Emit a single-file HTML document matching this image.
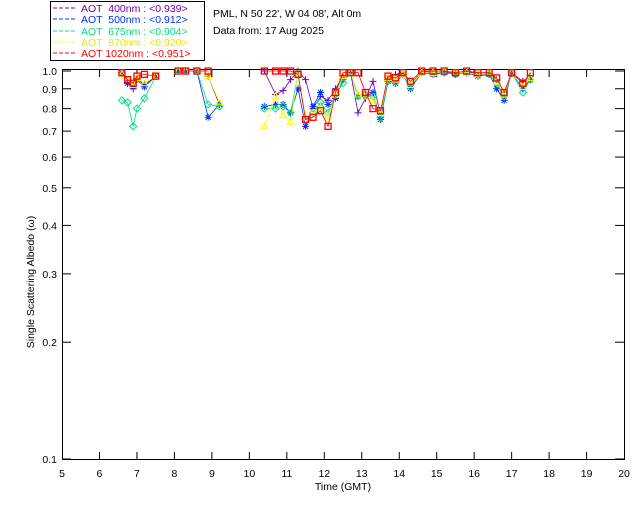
<!DOCTYPE html>
<html><head><meta charset="utf-8"><style>
body{margin:0;background:#fff;width:640px;height:512px;overflow:hidden}
svg text{font-family:"Liberation Sans",sans-serif;font-size:10.5px}
</style></head><body>
<svg id="s" width="640" height="512" xmlns="http://www.w3.org/2000/svg">
<rect x="50.5" y="1.5" width="154" height="59" fill="#fff" stroke="#000"/>
<g>
<line x1="53" y1="8" x2="76" y2="8" stroke="#7000b0" stroke-dasharray="4,2"/><text x="81" y="12" fill="#7000b0" xml:space="preserve">AOT  400nm : &lt;0.939&gt;</text>
<line x1="53" y1="19" x2="76" y2="19" stroke="#0030ff" stroke-dasharray="4,2"/><text x="81" y="23" fill="#0030ff" xml:space="preserve">AOT  500nm : &lt;0.912&gt;</text>
<line x1="53" y1="31" x2="76" y2="31" stroke="#00e080" stroke-dasharray="4,2"/><text x="81" y="35" fill="#00e080" xml:space="preserve">AOT  675nm : &lt;0.904&gt;</text>
<line x1="53" y1="42" x2="76" y2="42" stroke="#ffff00" stroke-dasharray="4,2"/><text x="81" y="46" fill="#e8e800" xml:space="preserve">AOT  870nm : &lt;0.920&gt;</text>
<line x1="53" y1="53" x2="76" y2="53" stroke="#ff0000" stroke-dasharray="4,2"/><text x="81" y="57" fill="#ff0000" xml:space="preserve">AOT 1020nm : &lt;0.951&gt;</text>
</g>
<text x="213" y="17">PML, N 50 22', W 04 08', Alt 0m</text>
<text x="213" y="34">Data from: 17 Aug 2025</text>
<rect x="62.5" y="69.5" width="562" height="390" fill="none" stroke="#000"/>
<g id="ax"></g>
<g id="data"></g>
<text x="343" y="490" text-anchor="middle">Time (GMT)</text>
<text transform="translate(34,282) rotate(-90)" text-anchor="middle">Single Scattering Albedo (ω)</text>
</svg>
<script>
var NS="http://www.w3.org/2000/svg";
function X(t){return 62+37.47*(t-5)}
function Y(v){return 71-388*Math.log10(Math.min(v,1))}
function el(p,n,a,txt){var e=document.createElementNS(NS,n);for(var k in a)e.setAttribute(k,a[k]);if(txt!=null)e.textContent=txt;p.appendChild(e);return e}
var ax=document.getElementById('ax');
for(var h=5;h<=20;h++){var x=X(h);if(h>5&&h<20){el(ax,'line',{x1:x,y1:459,x2:x,y2:452,stroke:'#000'});el(ax,'line',{x1:x,y1:70,x2:x,y2:77,stroke:'#000'});}
el(ax,'text',{x:x,y:477,'text-anchor':'middle'},h);}
[[1,'1.0'],[.9,'0.9'],[.8,'0.8'],[.7,'0.7'],[.6,'0.6'],[.5,'0.5'],[.4,'0.4'],[.3,'0.3'],[.2,'0.2'],[.1,'0.1']].forEach(function(a){var y=Y(a[0]);
el(ax,'line',{x1:62,y1:y,x2:71,y2:y,stroke:'#000'});el(ax,'line',{x1:624,y1:y,x2:615,y2:y,stroke:'#000'});
el(ax,'text',{x:57,y:y+4,'text-anchor':'end'},a[1]);});
var D=[[6.6,.99,.99,.84,.98,.99],[6.75,.93,.93,.83,.95,.95],[6.9,.9,.91,.72,.92,.93],[7.0,.96,.95,.8,.96,.97],[7.2,.92,.91,.85,.93,.98],[7.5,.97,.97,.97,.97,.97],
[8.1,1,1,1,1,1],[8.3,1,1,1,1,1],[8.6,1,1,1,1,1],[8.9,.97,.76,.82,.97,1],[9.2,.82,.82,.81,.83,null],
[10.4,1,.81,.8,.72,1],[10.7,.87,.82,.8,.86,1],[10.9,.89,.82,.81,.77,1],[11.1,.95,.78,.78,.74,1],[11.3,1,.9,.98,.98,.98],[11.5,.95,.72,.75,.76,.75],[11.7,.8,.81,.78,.78,.76],[11.9,.86,.88,.83,.8,.79],[12.1,.84,.82,.78,.76,.72],[12.3,.9,.85,.87,.87,.88],[12.5,.97,.95,.93,.97,.99],[12.7,.99,.99,.99,.99,.99],[12.9,.78,.86,.86,.87,.99],[13.1,.85,.86,.87,.86,.88],[13.3,.94,.88,.86,.84,.8],[13.5,.77,.75,.76,.78,.79],[13.7,.97,.94,.95,.96,.97],[13.9,.98,.93,.94,.95,.96],[14.1,.99,.98,.98,.98,.99],[14.3,.92,.9,.91,.92,.94],
[14.6,1,.99,.99,.99,1],[14.9,.99,.98,.99,.99,1],[15.2,1,.99,.99,1,1],[15.5,.98,.98,.98,.99,.99],[15.8,1,.99,.99,.99,1],[16.1,.98,.97,.98,.98,.99],[16.4,.99,.98,.98,.99,.99],[16.6,.95,.9,.93,.94,.96],[16.8,.86,.84,.86,.87,.88],[17.0,.99,.99,.99,.99,.99],[17.3,.94,.9,.88,.91,.93],[17.5,.97,.95,.95,.96,.99]];
var C=['#7000b0','#0030ff','#00e080','#ffff00','#ff0000'];
var g=document.getElementById('data');
for(var c=0;c<5;c++){var seg=[];var prev=null;
D.forEach(function(r){if(r[c+1]==null)return;if(prev!=null&&r[0]-prev>0.45){draw(seg);seg=[];}seg.push([X(r[0]),Y(r[c+1])]);prev=r[0];});draw(seg);
D.forEach(function(r){if(r[c+1]==null)return;var x=X(r[0]),y=Y(r[c+1]);mark(c,x,y);});}
function draw(seg){if(seg.length>1)el(g,'polyline',{points:seg.map(function(p){return p.join(',')}).join(' '),fill:'none',stroke:C[c],'stroke-width':0.8});}
function mark(c,x,y){var s=C[c];
if(c==0){el(g,'path',{d:'M'+(x-3.5)+' '+y+'h7M'+x+' '+(y-3.5)+'v7',stroke:s,fill:'none'});}
else if(c==1){el(g,'path',{d:'M'+(x-3.5)+' '+y+'h7M'+x+' '+(y-3.5)+'v7M'+(x-2.5)+' '+(y-2.5)+'l5 5M'+(x+2.5)+' '+(y-2.5)+'l-5 5',stroke:s,fill:'none'});}
else if(c==2){el(g,'path',{d:'M'+x+' '+(y-3.5)+'l3.5 3.5l-3.5 3.5l-3.5 -3.5z',stroke:s,fill:'none'});}
else if(c==3){el(g,'path',{d:'M'+x+' '+(y-3.5)+'l3.5 6h-7z',stroke:s,fill:'none'});}
else {el(g,'rect',{x:x-3,y:y-3,width:6,height:6,stroke:s,fill:'none','stroke-width':1.3});}}
</script>
</body></html>
